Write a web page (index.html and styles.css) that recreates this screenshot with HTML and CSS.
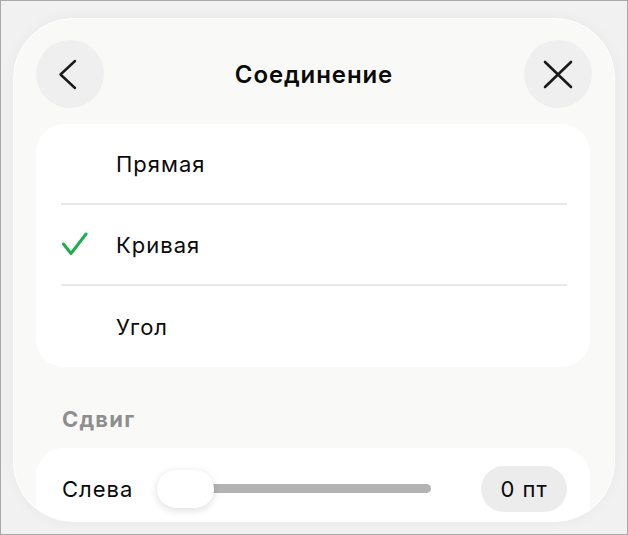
FILE: index.html
```html
<!DOCTYPE html>
<html lang="ru">
<head>
<meta charset="UTF-8">
<meta name="viewport" content="width=device-width, initial-scale=1.0">
<title>Соединение</title>
<link rel="stylesheet" href="styles.css">
</head>
<body>

<div class="panel">
    <!-- Header -->
    <div class="header">
        <button class="round-btn" aria-label="Назад">
            <svg width="68" height="68" viewBox="0 0 68 68">
                <path d="M39 21 L24.5 34.5 L39 48" fill="none" stroke="#1a1a1a" stroke-width="2.4" stroke-linecap="round" stroke-linejoin="round"/>
            </svg>
        </button>
        <div class="title">Соединение</div>
        <button class="round-btn" aria-label="Закрыть">
            <svg width="68" height="68" viewBox="0 0 68 68">
                <path d="M21 22 L47 47 M47 22 L21 47" fill="none" stroke="#1a1a1a" stroke-width="2.6" stroke-linecap="round"/>
            </svg>
        </button>
    </div>

    <!-- Connection type -->
    <div class="card options">
        <div class="option">
            <span class="mark"></span>
            <span>Прямая</span>
        </div>
        <div class="option">
            <span class="mark">
                <svg width="28" height="26" viewBox="0 0 28 26">
                    <path d="M2.5 12 L10 21.5 L25 2" fill="none" stroke="#1fae4f" stroke-width="3" stroke-linecap="round" stroke-linejoin="round"/>
                </svg>
            </span>
            <span>Кривая</span>
        </div>
        <div class="option">
            <span class="mark"></span>
            <span>Угол</span>
        </div>
    </div>

    <!-- Offset -->
    <div class="section-label">Сдвиг</div>
    <div class="card slider-card">
        <div class="slider-row">
            <span class="slider-label">Слева</span>
            <div class="slider">
                <div class="track"></div>
                <div class="thumb"></div>
            </div>
            <span class="value">0 пт</span>
        </div>
    </div>
</div>

</body>
</html>
```

FILE: styles.css
```css
html, body {
    margin: 0;
    height: 100%;
}

body {
    box-sizing: border-box;
    height: 535px;
    border: 1px solid #a9a9a9;
    background-color: #f1f1f1;
    padding: 17px 12px 0 12px;
    font-family: Inter, "Noto Sans", sans-serif;
    color: #0a0a0a;
    overflow: hidden;
}

.panel {
    box-sizing: border-box;
    height: 504px;
    background-color: #f9f9f8;
    border: 1.5px solid #ffffff;
    border-radius: 60px;
    padding: 21px 22px 0 22px;
    overflow: hidden;
    box-shadow: 0 0 14px rgba(0, 0, 0, 0.04);
}

.header {
    display: grid;
    grid-template-columns: 68px 1fr 68px;
    align-items: center;
    height: 68px;
}

.round-btn {
    width: 68px;
    height: 68px;
    padding: 0;
    border: none;
    border-radius: 50%;
    background-color: #efefef;
    display: flex;
    align-items: center;
    justify-content: center;
    cursor: pointer;
}

.title {
    text-align: center;
    font-size: 24px;
    font-weight: 600;
    letter-spacing: 0.9px;
}

.card {
    background-color: #ffffff;
    border-radius: 28px;
    margin-right: 2px;
}

.options {
    margin-top: 16px;
}

.option {
    display: flex;
    align-items: center;
    height: 81px;
    margin: 0 23px 0 25px;
    font-size: 22px;
    letter-spacing: 1px;
    border-bottom: 2px solid #e8e8e8;
    box-sizing: border-box;
}

.option:last-child {
    border-bottom: none;
}

.mark {
    width: 55px;
    flex: none;
    display: flex;
    align-items: center;
}

.section-label {
    margin-top: 39px;
    padding-left: 26px;
    height: 26px;
    line-height: 26px;
    font-size: 22px;
    font-weight: 700;
    letter-spacing: 1.2px;
    color: #8e8e8e;
}

.slider-card {
    margin-top: 16px;
    height: 120px;
}

.slider-row {
    display: flex;
    align-items: center;
    height: 82px;
    padding: 0 23px 0 26px;
    font-size: 22px;
    letter-spacing: 1px;
}

.slider-label {
    width: 95px;
    flex: none;
}

.slider {
    position: relative;
    width: 274px;
    height: 38px;
    flex: none;
}

.track {
    position: absolute;
    left: 20px;
    right: 0;
    top: 14px;
    height: 9px;
    border-radius: 5px;
    background-color: #b3b3b3;
}

.thumb {
    position: absolute;
    left: 0;
    top: 0;
    width: 57px;
    height: 38px;
    border-radius: 19px;
    background-color: #ffffff;
    box-shadow: 0 2px 9px rgba(0, 0, 0, 0.14);
}

.value {
    margin-left: auto;
    width: 86px;
    height: 46px;
    border-radius: 23px;
    background-color: #ececec;
    display: flex;
    align-items: center;
    justify-content: center;
}
```
